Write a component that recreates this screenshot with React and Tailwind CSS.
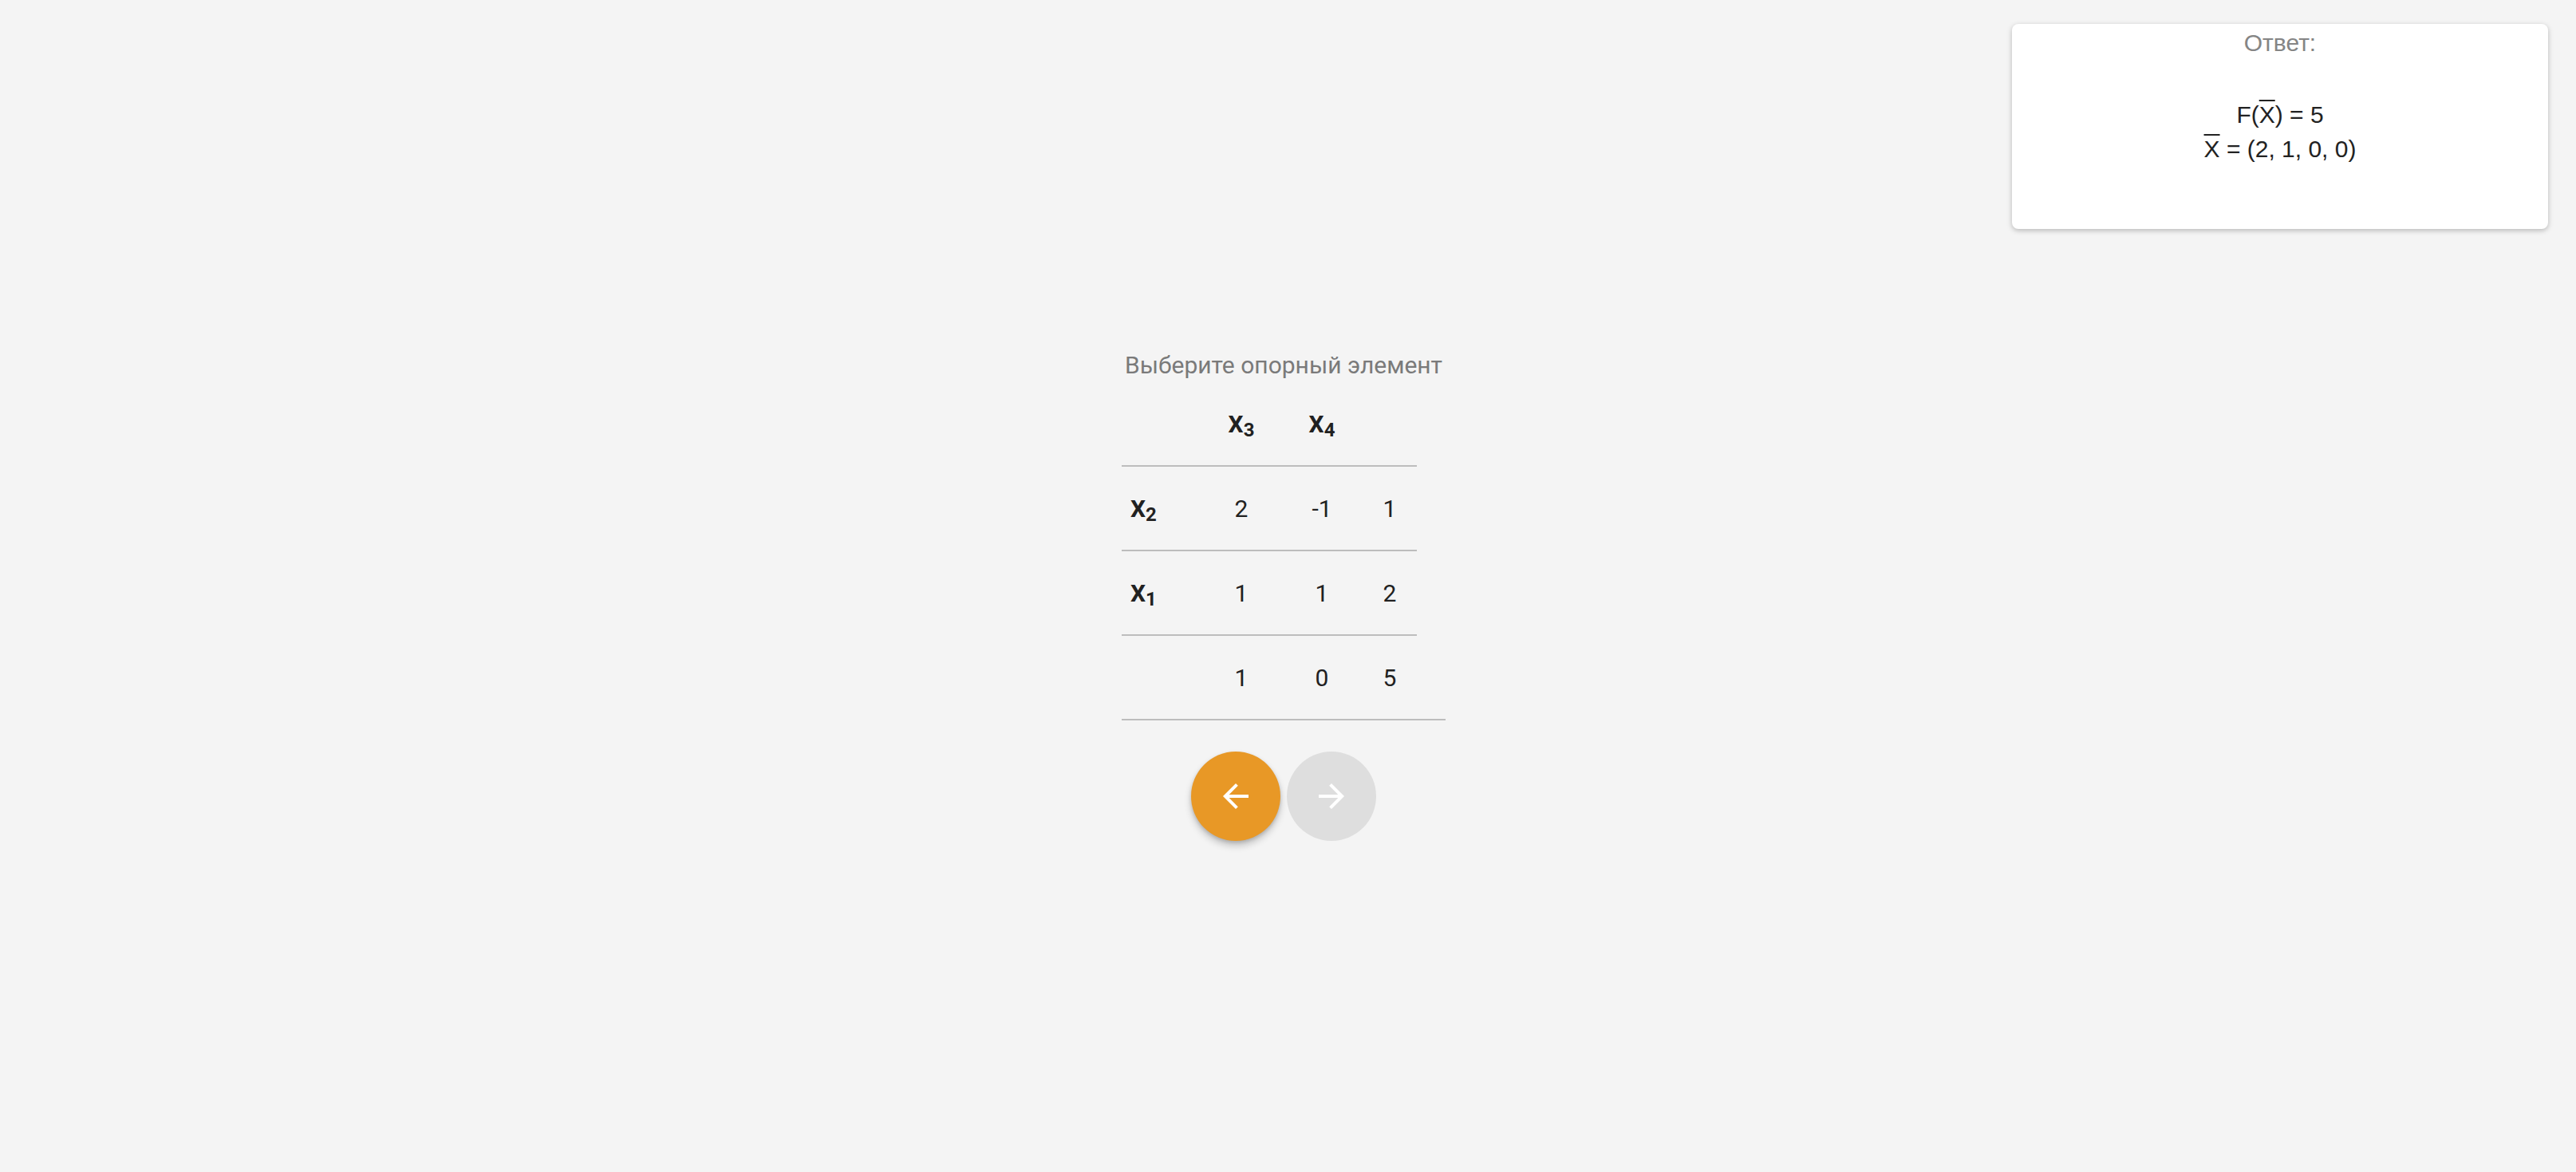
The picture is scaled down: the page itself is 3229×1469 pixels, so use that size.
import { useState } from 'react'

const columns = [3, 4]

const rows = [
  { basis: 2, values: ['2', '-1', '1'] },
  { basis: 1, values: ['1', '1', '2'] },
]

const totals = ['1', '0', '5']

function Variable({ index }) {
  return (
    <span className="font-bold text-[#212121]">
      X<span className="relative top-[0.22em] text-[0.8em]">{index}</span>
    </span>
  )
}

function ArrowBack() {
  return (
    <svg viewBox="0 0 24 24" className="w-[48px] h-[48px]" fill="currentColor">
      <path d="M20 11H7.83l5.59-5.59L12 4l-8 8 8 8 1.41-1.41L7.83 13H20v-2z" />
    </svg>
  )
}

function ArrowForward() {
  return (
    <svg viewBox="0 0 24 24" className="w-[48px] h-[48px]" fill="currentColor">
      <path d="M12 4l-1.41 1.41L16.17 11H4v2h12.17l-5.58 5.59L12 20l8-8z" />
    </svg>
  )
}

export default function App() {
  const [step, setStep] = useState(1)

  return (
    <div className="relative min-h-screen w-full bg-[#f4f4f4] font-['Roboto',sans-serif]">
      <div className="flex justify-center pt-[437px] pr-[11px]">
        <div className="w-[406px] flex flex-col items-stretch">
          <p className="text-center text-[30px] leading-[42px] text-[#7a7a7a] whitespace-nowrap">
            Выберите опорный элемент
          </p>

          <div className="grid grid-cols-[100px_100px_102px_68px] w-[370px] h-[106px] items-center border-b-2 border-[#bdbdbd] text-[30px]">
            <span />
            {columns.map((col) => (
              <span key={col} className="text-center">
                <Variable index={col} />
              </span>
            ))}
            <span />
          </div>

          {rows.map((row) => (
            <div
              key={row.basis}
              className="grid grid-cols-[100px_100px_102px_68px] w-[370px] h-[106px] items-center border-b-2 border-[#bdbdbd] text-[30px] text-[#212121]"
            >
              <span className="pl-[11px]">
                <Variable index={row.basis} />
              </span>
              {row.values.map((value, i) => (
                <span key={i} className="text-center">
                  {value}
                </span>
              ))}
            </div>
          ))}

          <div className="w-[406px] h-[106px] border-b-2 border-[#bdbdbd]">
            <div className="grid grid-cols-[100px_100px_102px_68px] w-[370px] h-full items-center text-[30px] text-[#212121]">
              <span />
              {totals.map((value, i) => (
                <span key={i} className="text-center">
                  {value}
                </span>
              ))}
            </div>
          </div>

          <div className="flex justify-center gap-[8px] mt-[39px]">
            <button
              type="button"
              onClick={() => setStep((s) => Math.max(0, s - 1))}
              className="w-[112px] h-[112px] rounded-full bg-[#e89826] text-white flex items-center justify-center shadow-[0_6px_10px_rgba(0,0,0,0.2),0_2px_4px_rgba(0,0,0,0.14)]"
            >
              <ArrowBack />
            </button>
            <button
              type="button"
              disabled
              className="w-[112px] h-[112px] rounded-full bg-[#dedede] text-white flex items-center justify-center"
            >
              <ArrowForward />
            </button>
          </div>
        </div>
      </div>

      <div className="absolute top-[30px] right-[35px] w-[672px] h-[257px] rounded-[8px] bg-white shadow-[0_2px_6px_rgba(0,0,0,0.25)] font-['Liberation_Sans',Arial,sans-serif] text-center">
        <p className="pt-[3px] text-[30px] leading-[42px] text-[#858585]">Ответ:</p>
        <div className="mt-[47px] text-[30px] leading-[43px] text-[#222222]">
          <p>
            F(<span className="overline decoration-2">X</span>) = 5
          </p>
          <p>
            <span className="overline decoration-2">X</span> = (2, 1, 0, 0)
          </p>
        </div>
      </div>
    </div>
  )
}
